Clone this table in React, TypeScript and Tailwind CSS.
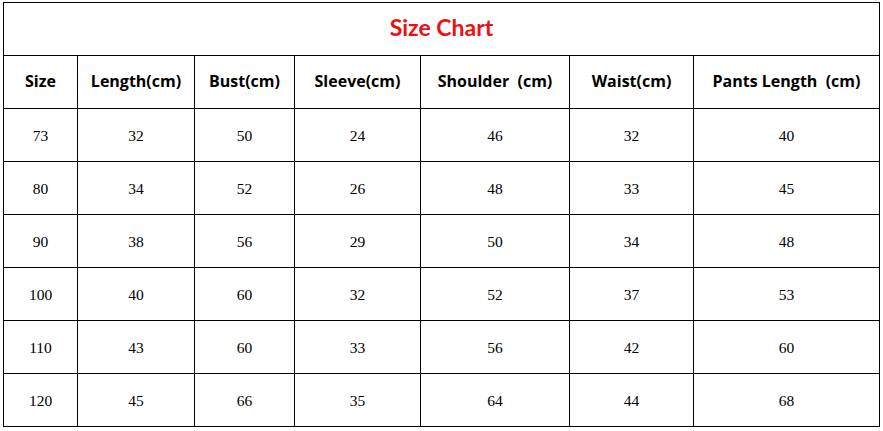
const headers = ['Size', 'Length(cm)', 'Bust(cm)', 'Sleeve(cm)', 'Shoulder\u00a0\u00a0(cm)', 'Waist(cm)', 'Pants Length\u00a0\u00a0(cm)'];

const rows = [
  ['73', '32', '50', '24', '46', '32', '40'],
  ['80', '34', '52', '26', '48', '33', '45'],
  ['90', '38', '56', '29', '50', '34', '48'],
  ['100', '40', '60', '32', '52', '37', '53'],
  ['110', '43', '60', '33', '56', '42', '60'],
  ['120', '45', '66', '35', '64', '44', '68'],
];

export default function App() {
  return (
    <div className="w-[883px] h-[431px] bg-white pl-[3px] pt-[2px]">
      <div className="inline-grid grid-cols-[73px_116px_99px_125px_148px_123px_185px] auto-rows-[52px] gap-px bg-black p-px">
        {/* Title */}
        <div className="col-span-7 bg-white flex items-center justify-center pb-[3px] text-[23px] font-bold text-[#ee1111] font-['Lato','Open_Sans',sans-serif]">
          Size Chart
        </div>

        {/* Header */}
        {headers.map((h) => (
          <div
            key={h}
            className="bg-white flex items-center justify-center pb-[2px] text-[16px] font-bold text-black font-['Open_Sans',sans-serif] whitespace-nowrap"
          >
            {h}
          </div>
        ))}

        {/* Data */}
        {rows.map((row, i) =>
          row.map((v, j) => (
            <div
              key={`${i}-${j}`}
              className="bg-white flex items-center justify-center pt-[1px] text-[15.5px] text-black font-['Liberation_Serif',serif]"
            >
              {v}
            </div>
          ))
        )}
      </div>
    </div>
  );
}
